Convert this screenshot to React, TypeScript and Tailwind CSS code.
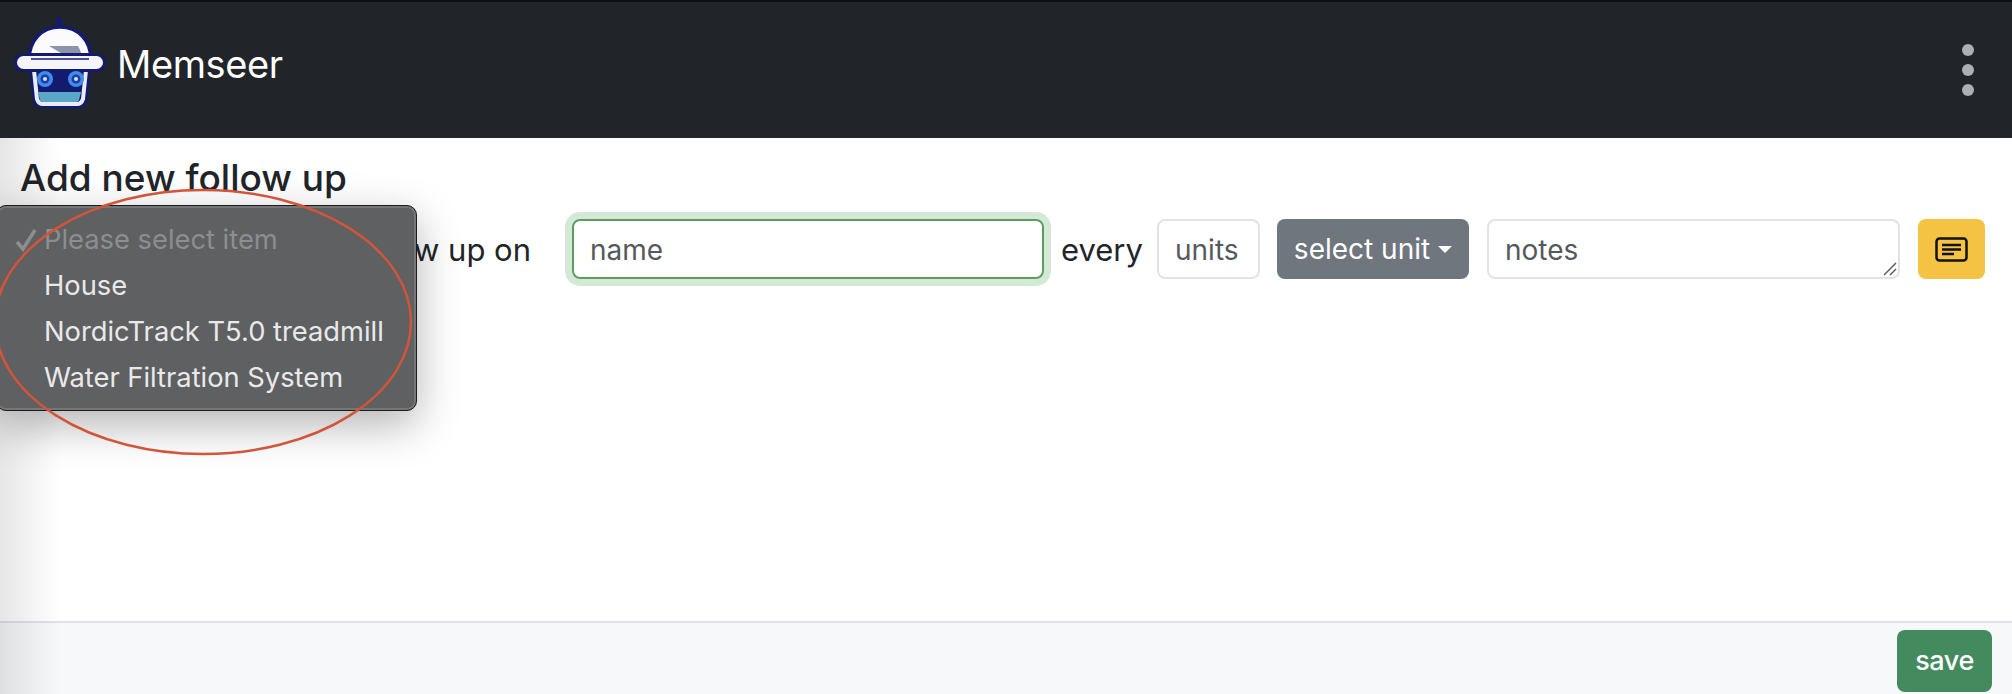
import React from 'react';

const font = { fontFamily: 'Inter, "Liberation Sans", sans-serif' };

// Memseer robot logo, viewBox is in page pixels
const Logo = () => (
    <svg width="100" height="100" viewBox="10 10 100 100" className="shrink-0 -mt-[6px]">
        <rect x="56" y="17" width="6" height="13" rx="3" fill="#141a6e" />
        <path d="M29 60 C29 40 42 27 60 27 C78 27 91 40 91 60 Z" fill="#fbfbfd" stroke="#141a6e" strokeWidth="3.5" />
        <path d="M49 46 H78 L80 50 L82 56 H66 Z" fill="#8d93a8" />
        <path d="M31 71 H89 L86 100 C85 105 81 107 77 107 H43 C39 107 35 105 34 100 Z" fill="#141a6e" stroke="#141a6e" strokeWidth="3" />
        <path d="M34 70 L37 99 C38 102 40 104 43 104 H77 C80 104 82 102 83 99 L86 70" fill="none" stroke="#e9ebf5" strokeWidth="4" />
        <rect x="15.5" y="54.5" width="89" height="16" rx="8" fill="#f6f6fa" stroke="#141a6e" strokeWidth="3" />
        <path d="M31 59 H89" stroke="#141a6e" strokeWidth="1.5" />
        <circle cx="45" cy="79" r="8" fill="#3f8cf0" />
        <circle cx="45" cy="79" r="4.5" fill="#1f3f9e" />
        <circle cx="45" cy="79" r="2" fill="#cfe3ff" />
        <circle cx="76" cy="79" r="8" fill="#3f8cf0" />
        <circle cx="76" cy="79" r="4.5" fill="#1f3f9e" />
        <circle cx="76" cy="79" r="2" fill="#cfe3ff" />
        <path d="M38 92 H81 L79 100 C78 102 77 102 75 102 H44 C42 102 41 102 40 100 Z" fill="#5aa7c7" />
    </svg>
);

const NotesIcon = () => (
    <svg width="33" height="25" viewBox="0 0 33 25" fill="none" stroke="#111" strokeWidth="2.5">
        <rect x="1.5" y="1.5" width="30" height="22" rx="3" />
        <path d="M7 8 H26 M7 12.5 H26 M7 17 H19" />
    </svg>
);

const MenuItem = ({ label, selected }: { label: string; selected?: boolean }) => (
    <div className={`relative h-[46px] pl-[47px] flex items-center whitespace-nowrap text-[27.3px] ${selected ? 'text-[#8c8e90]' : 'text-[#e9e9ea]'}`}>
        {selected && (
            <svg width="22" height="24" viewBox="0 0 22 24" fill="none" stroke="#8c8e90" strokeWidth="3.5" className="absolute left-[18px] top-[11px]">
                <path d="M2 14 L8 21 L20 2" />
            </svg>
        )}
        {label}
    </div>
);

const items = ['House', 'NordicTrack T5.0 treadmill', 'Water Filtration System'];

export default function App() {
    return (
        <div className="relative h-[694px] w-[2012px] overflow-hidden bg-white flex flex-col text-[#212529]" style={font}>
            {/* Navbar */}
            <header className="h-[138px] shrink-0 bg-[#212529] border-t-2 border-[#0c0e10] flex items-center pl-[10px] pr-[38px]">
                <div className="-mt-[14px] flex items-center">
                    <Logo />
                    <span className="ml-[7px] mt-[2px] text-[38px] tracking-[-0.4px] text-white">Memseer</span>
                </div>
                <div className="ml-auto flex flex-col gap-[8px]">
                    <span className="block w-[12px] h-[12px] rounded-full bg-[#adb0b3]" />
                    <span className="block w-[12px] h-[12px] rounded-full bg-[#adb0b3]" />
                    <span className="block w-[12px] h-[12px] rounded-full bg-[#adb0b3]" />
                </div>
            </header>

            {/* Form */}
            <main className="flex-1 pl-[20px] pr-[27px] pt-[18px]">
                <h2 className="text-[37px] leading-[44px] font-medium">Add new follow up</h2>
                <div className="mt-[19px] flex items-center h-[60px] text-[31px]">
                    <span className="flex-1 text-right pr-[41px] pt-[2px] whitespace-nowrap">Follow up on</span>
                    <div className="w-[472px] h-[60px] rounded-[8px] border-2 border-[#5b9d60] ring-[7px] ring-[#d3e8d5] flex items-center px-[16px] pt-[2px] text-[28px] text-[#55595d]">name</div>
                    <span className="ml-[17px] w-[80px] pt-[2px]">every</span>
                    <div className="ml-[16px] w-[103px] h-[60px] rounded-[8px] border-2 border-[#e2e3e5] flex items-center px-[16px] pt-[2px] text-[28px] text-[#55595d]">units</div>
                    <button className="ml-[17px] w-[192px] h-[60px] rounded-[8px] bg-[#6f767d] text-white text-[28px] flex items-center justify-center gap-[8px]">
                        select unit
                        <span className="w-0 h-0 border-x-[7px] border-x-transparent border-t-[7px] border-t-white" />
                    </button>
                    <div className="relative ml-[18px] w-[413px] h-[60px] rounded-[8px] border-2 border-[#e2e3e5] flex items-center px-[16px] pt-[2px] text-[28px] text-[#55595d]">
                        notes
                        <svg width="14" height="14" viewBox="0 0 14 14" className="absolute right-[1px] bottom-[1px]" stroke="#555" strokeWidth="1.4">
                            <path d="M1 13 L13 1 M7 13 L13 7" />
                        </svg>
                    </div>
                    <button className="ml-[18px] w-[67px] h-[60px] rounded-[8px] bg-[#f4c343] flex items-center justify-center">
                        <NotesIcon />
                    </button>
                </div>
            </main>

            {/* Footer */}
            <footer className="h-[73px] shrink-0 bg-[#f7f8fa] border-t-2 border-[#e0e2e5] flex justify-end items-start pt-[7px] pr-[20px]">
                <button className="w-[95px] h-[62px] rounded-[8px] bg-[#438a5e] text-white text-[27px] font-medium tracking-[-0.4px]">save</button>
            </footer>

            {/* Edge shadow from the open menu */}
            <div className="absolute left-0 top-[138px] bottom-0 w-[60px] bg-gradient-to-r from-black/10 to-transparent pointer-events-none" />

            {/* Native select menu */}
            <div className="absolute left-[-4px] top-[205px] w-[421px] h-[206px] rounded-[10px] bg-[#5f6062] border border-[#1c1c1e] shadow-[0_14px_44px_rgba(0,0,0,0.3),inset_0_0_0_2px_rgba(255,255,255,0.14)] pt-[11px]">
                <MenuItem label="Please select item" selected />
                {items.map((item) => (
                    <MenuItem key={item} label={item} />
                ))}
            </div>

            {/* Red annotation ellipse */}
            <svg width="440" height="290" viewBox="0 0 440 290" fill="none" className="absolute left-[-10px] top-[178px] pointer-events-none">
                <ellipse cx="213" cy="144" rx="208" ry="132" stroke="#d2553a" strokeWidth="2.5" />
            </svg>
        </div>
    );
}
